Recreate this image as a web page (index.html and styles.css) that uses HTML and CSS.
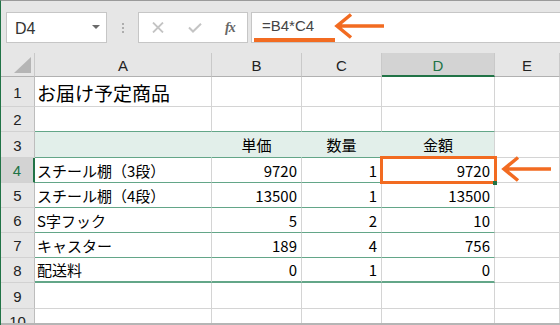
FILE: index.html
```html
<!DOCTYPE html>
<html lang="ja">
<head>
    <meta charset="UTF-8">
    <meta name="viewport" content="width=device-width, initial-scale=1.0">
    <title>お届け予定商品</title>
    <link rel="stylesheet" href="styles.css">
</head>
<body>
    <div class="window">
        <!-- Formula bar -->
        <div class="formula-bar">
            <div class="name-box">
                <span>D4</span>
                <span class="caret"></span>
            </div>
            <div class="grip"><i></i><i></i><i></i></div>
            <div class="fx-buttons">
                <svg class="icon" width="12" height="11" viewBox="0 0 12 11">
                    <path d="M1 0.5 L11 10.5 M11 0.5 L1 10.5" stroke="#c4c4c4" stroke-width="1.8" fill="none"/>
                </svg>
                <svg class="icon" width="14" height="10" viewBox="0 0 14 10">
                    <path d="M1 4.5 L5 8.5 L13 0.8" stroke="#c4c4c4" stroke-width="2" fill="none"/>
                </svg>
                <span class="fx">fx</span>
            </div>
            <div class="formula">
                <span class="formula-text">=B4*C4</span>
            </div>
        </div>

        <!-- Worksheet -->
        <div class="sheet">
            <table class="grid">
                <colgroup>
                    <col class="w-rh">
                    <col class="w-a">
                    <col class="w-b">
                    <col class="w-c">
                    <col class="w-d">
                    <col class="w-e">
                </colgroup>
                <tr class="h-head">
                    <td class="col-head corner"><div class="corner-mark"></div></td>
                    <td class="col-head">A</td>
                    <td class="col-head">B</td>
                    <td class="col-head">C</td>
                    <td class="col-head active">D</td>
                    <td class="col-head">E</td>
                </tr>
                <tr class="h-title">
                    <td class="row-head">1</td>
                    <td class="title">お届け予定商品</td>
                    <td></td><td></td><td></td><td></td>
                </tr>
                <tr>
                    <td class="row-head">2</td>
                    <td class="band-top"></td><td class="band-top"></td><td class="band-top"></td><td class="band-top"></td>
                    <td></td>
                </tr>
                <tr class="h-26">
                    <td class="row-head">3</td>
                    <td class="band head"></td>
                    <td class="band head">単価</td>
                    <td class="band head">数量</td>
                    <td class="band head last">金額</td>
                    <td></td>
                </tr>
                <tr>
                    <td class="row-head active">4</td>
                    <td class="band">スチール棚（3段）</td>
                    <td class="band num">9720</td>
                    <td class="band num">1</td>
                    <td class="band num">9720</td>
                    <td></td>
                </tr>
                <tr>
                    <td class="row-head">5</td>
                    <td class="band">スチール棚（4段）</td>
                    <td class="band num">13500</td>
                    <td class="band num">1</td>
                    <td class="band num">13500</td>
                    <td></td>
                </tr>
                <tr>
                    <td class="row-head">6</td>
                    <td class="band">S字フック</td>
                    <td class="band num">5</td>
                    <td class="band num">2</td>
                    <td class="band num">10</td>
                    <td></td>
                </tr>
                <tr>
                    <td class="row-head">7</td>
                    <td class="band">キャスター</td>
                    <td class="band num">189</td>
                    <td class="band num">4</td>
                    <td class="band num">756</td>
                    <td></td>
                </tr>
                <tr>
                    <td class="row-head">8</td>
                    <td class="band end">配送料</td>
                    <td class="band end num">0</td>
                    <td class="band end num">1</td>
                    <td class="band end num">0</td>
                    <td></td>
                </tr>
                <tr class="h-26">
                    <td class="row-head">9</td>
                    <td></td><td></td><td></td><td></td><td></td>
                </tr>
                <tr>
                    <td class="row-head">10</td>
                    <td></td><td></td><td></td><td></td><td></td>
                </tr>
            </table>
        </div>

        <!-- Callouts -->
        <div class="mark-cell"></div>
        <div class="fill-handle"></div>
        <svg class="arrow arrow-formula" width="52" height="28" viewBox="0 0 52 28">
            <path d="M50 13 H3 M17 1.5 L3 13 L17 24.5" stroke="#f26b21" stroke-width="3.5" fill="none"/>
        </svg>
        <svg class="arrow arrow-cell" width="52" height="28" viewBox="0 0 52 28">
            <path d="M50 13 H3 M17 1.5 L3 13 L17 24.5" stroke="#f26b21" stroke-width="3.5" fill="none"/>
        </svg>
    </div>
</body>
</html>
```

FILE: styles.css
```css
/* Base */
html, body {
    margin: 0;
    height: 100%;
    overflow: hidden;
}
body {
    background-color: #e6e6e6;
    font-family: "Noto Sans CJK JP", sans-serif;
    color: #000;
}
.window {
    position: relative;
    height: 100%;
    border-top: 1px solid #9a9a9a;
    border-left: 1px solid #217346;
    box-sizing: border-box;
}

/* Formula bar */
.formula-bar {
    display: flex;
    align-items: flex-start;
    height: 52px;
    padding: 11px 0 0 5px;
    box-sizing: border-box;
}
.name-box {
    width: 101px;
    height: 31px;
    box-sizing: border-box;
    border: 1px solid #c6c6c6;
    background: #fff;
    display: flex;
    align-items: center;
    justify-content: space-between;
    padding: 2px 6px 0 8px;
    font-family: "Liberation Sans", sans-serif;
    font-size: 16px;
    color: #333;
}
.name-box .caret {
    width: 0;
    height: 0;
    border-left: 4px solid transparent;
    border-right: 4px solid transparent;
    border-top: 4px solid #6a6a6a;
    margin-bottom: 3px;
}
.grip {
    width: 31px;
    height: 31px;
    display: flex;
    flex-direction: column;
    align-items: center;
    justify-content: center;
    gap: 2px;
    padding-left: 1px;
    box-sizing: border-box;
}
.grip i {
    display: block;
    width: 2px;
    height: 2px;
    background: #adadad;
}
.fx-buttons {
    width: 110px;
    height: 31px;
    box-sizing: border-box;
    border: 1px solid #c6c6c6;
    background: #fff;
    display: flex;
    align-items: center;
    padding: 0 0 0 13px;
}
.fx-buttons .icon {
    display: block;
}
.fx-buttons .icon + .icon {
    margin-left: 24px;
}
.fx {
    margin-left: 23px;
    font-family: "Liberation Serif", serif;
    font-style: italic;
    font-weight: bold;
    font-size: 14px;
    color: #666;
    letter-spacing: -1px;
}
.formula {
    flex: 1;
    height: 31px;
    margin-left: 3px;
    margin-right: -2px;
    box-sizing: border-box;
    border: 1px solid #c6c6c6;
    background: #fff;
    padding: 4px 0 0 10px;
    position: relative;
    font-family: "Liberation Sans", sans-serif;
    font-size: 15px;
    color: #444;
}
.formula-text::after {
    content: "";
    position: absolute;
    left: 2px;
    bottom: 0;
    width: 81px;
    height: 4px;
    background: #f26b21;
}

/* Worksheet grid */
.sheet {
    height: 272px;
    overflow: hidden;
    box-sizing: border-box;
    border-bottom: 2px solid #b5b5b5;
}
.grid {
    table-layout: fixed;
    border-collapse: separate;
    border-spacing: 0;
    width: 559px;
    background: #fff;
    font-size: 15px;
}
.w-rh { width: 34px; }
.w-a { width: 177px; }
.w-b { width: 90px; }
.w-c { width: 80px; }
.w-d { width: 113px; }
.w-e { width: 65px; }

.grid tr { height: 25px; }
.grid tr.h-head { height: 24px; }
.grid tr.h-title { height: 30px; }
.grid tr.h-26 { height: 26px; }

.grid td {
    padding: 0 4px 0 2px;
    border-right: 1px solid #d4d4d4;
    border-bottom: 1px solid #d4d4d4;
    white-space: nowrap;
    overflow: hidden;
    line-height: 1;
    vertical-align: middle;
}

.col-head {
    background: #e6e6e6;
    text-align: center;
    font-family: "Liberation Sans", sans-serif;
    font-size: 15px;
    color: #222;
    border-right-color: #c9c9c9 !important;
    border-bottom-color: #b1b1b1 !important;
    padding: 2px 0 0 !important;
}
.col-head.active {
    background: #d3d3d3;
    color: #217346;
    border-bottom: 2px solid #217346 !important;
}
.corner {
    vertical-align: bottom !important;
    padding: 0 3px 3px 0 !important;
}
.corner-mark {
    width: 17px;
    height: 16px;
    margin-left: auto;
    background: #b5b5b5;
    clip-path: polygon(100% 0, 100% 100%, 0 100%);
}

.row-head {
    background: #e6e6e6;
    text-align: center;
    font-family: "Liberation Sans", sans-serif;
    font-size: 15px;
    color: #222;
    padding: 1px 0 0 !important;
    border-right-color: #bdbdbd !important;
    border-bottom-color: #d2d2d2 !important;
}
.row-head.active {
    background: #d3d3d3;
    color: #217346;
    border-right: 2px solid #217346 !important;
}

.title {
    font-size: 19px;
    padding-top: 2px !important;
}

/* Table block A3:D8 */
.band-top {
    border-bottom-color: #63a688 !important;
}
.band {
    border-bottom-color: #63a688 !important;
}
.band.head {
    background: #e2efea;
    border-right-color: #e2efea;
    text-align: center;
    padding: 0 !important;
}
.band.head.last {
    border-right-color: #d4d4d4;
}
.band.end {
    border-bottom-width: 2px;
}
.num {
    text-align: right;
}

/* Callouts */
.mark-cell {
    position: absolute;
    left: 379px;
    top: 155px;
    width: 117px;
    height: 28px;
    box-sizing: border-box;
    border: 3px solid #f26b21;
}
.fill-handle {
    position: absolute;
    left: 492px;
    top: 180px;
    width: 4px;
    height: 4px;
    background: #217346;
}
.arrow {
    position: absolute;
}
.arrow-formula {
    left: 333px;
    top: 12px;
}
.arrow-cell {
    left: 500px;
    top: 155px;
}
```
